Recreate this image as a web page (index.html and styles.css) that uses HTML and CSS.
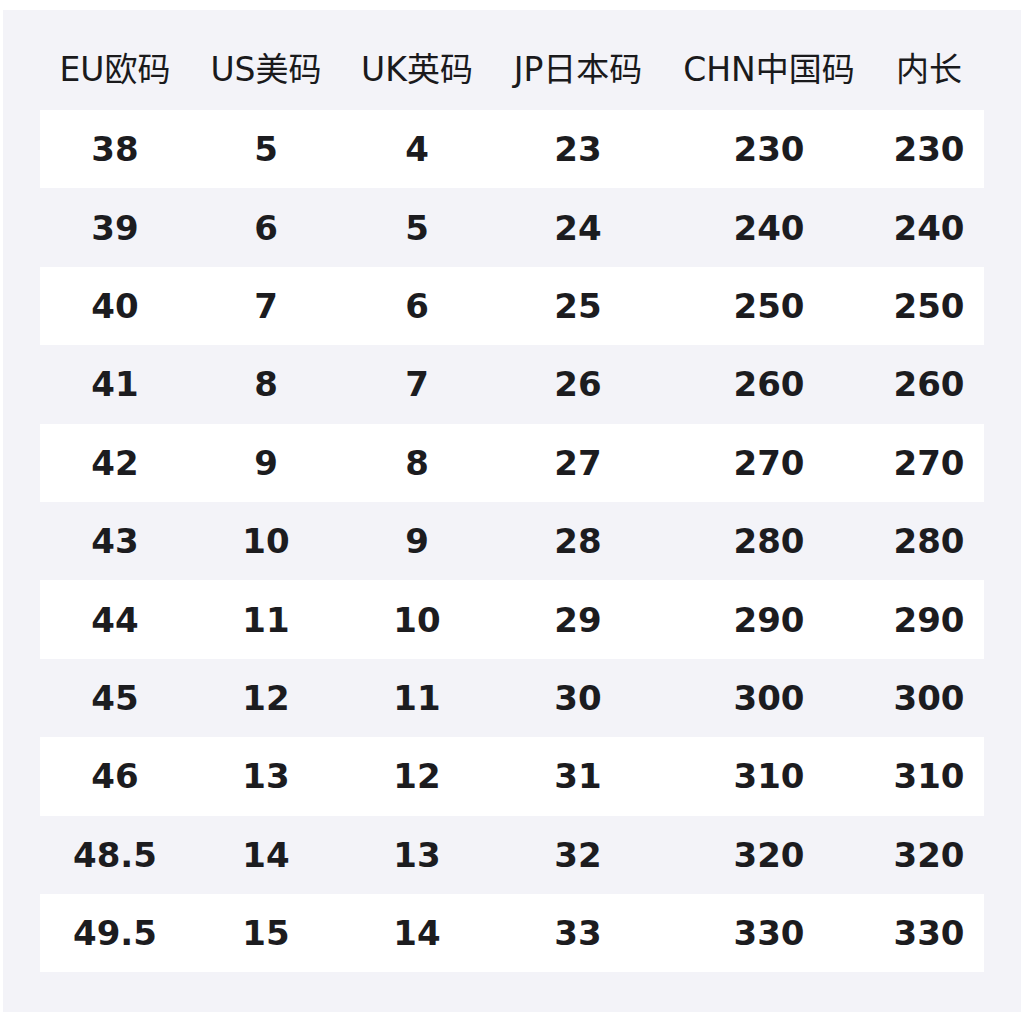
FILE: index.html
```html
<!DOCTYPE html>
<html lang="zh-CN">
<head>
<meta charset="utf-8">
<title>尺码表</title>
<link rel="stylesheet" href="styles.css">
</head>
<body>
<div class="panel">
  <div class="row head">
    <div>EU欧码</div><div>US美码</div><div>UK英码</div><div>JP日本码</div><div>CHN中国码</div><div>内长</div>
  </div>
  <div class="row w"><div>38</div><div>5</div><div>4</div><div>23</div><div>230</div><div>230</div></div>
  <div class="row"><div>39</div><div>6</div><div>5</div><div>24</div><div>240</div><div>240</div></div>
  <div class="row w"><div>40</div><div>7</div><div>6</div><div>25</div><div>250</div><div>250</div></div>
  <div class="row"><div>41</div><div>8</div><div>7</div><div>26</div><div>260</div><div>260</div></div>
  <div class="row w"><div>42</div><div>9</div><div>8</div><div>27</div><div>270</div><div>270</div></div>
  <div class="row"><div>43</div><div>10</div><div>9</div><div>28</div><div>280</div><div>280</div></div>
  <div class="row w"><div>44</div><div>11</div><div>10</div><div>29</div><div>290</div><div>290</div></div>
  <div class="row"><div>45</div><div>12</div><div>11</div><div>30</div><div>300</div><div>300</div></div>
  <div class="row w"><div>46</div><div>13</div><div>12</div><div>31</div><div>310</div><div>310</div></div>
  <div class="row"><div>48.5</div><div>14</div><div>13</div><div>32</div><div>320</div><div>320</div></div>
  <div class="row w"><div>49.5</div><div>15</div><div>14</div><div>33</div><div>330</div><div>330</div></div>
</div>
</body>
</html>
```
FILE: styles.css
```css
html, body {
  margin: 0;
  padding: 0;
  background: #ffffff;
}
body {
  padding: 10px 3px 12px 3px;
  font-family: "DejaVu Sans", "Noto Sans CJK SC", sans-serif;
  color: #1c1c1f;
}
.panel {
  width: 1018px;
  height: 1002px;
  box-sizing: border-box;
  background: #f3f3f8;
  padding: 20px 37px 40px 37px;
}
.row {
  display: grid;
  grid-template-columns: 150px 152px 150px 172px 210px 110px;
  height: 78.4px;
  align-items: center;
  text-align: center;
  font-size: 34px;
  font-weight: bold;
}
.row.w {
  background: #ffffff;
}
.row.head {
  height: 80px;
  box-sizing: border-box;
  padding-bottom: 6px;
  font-size: 33px;
  font-weight: normal;
  color: #1a1a1c;
}
```
